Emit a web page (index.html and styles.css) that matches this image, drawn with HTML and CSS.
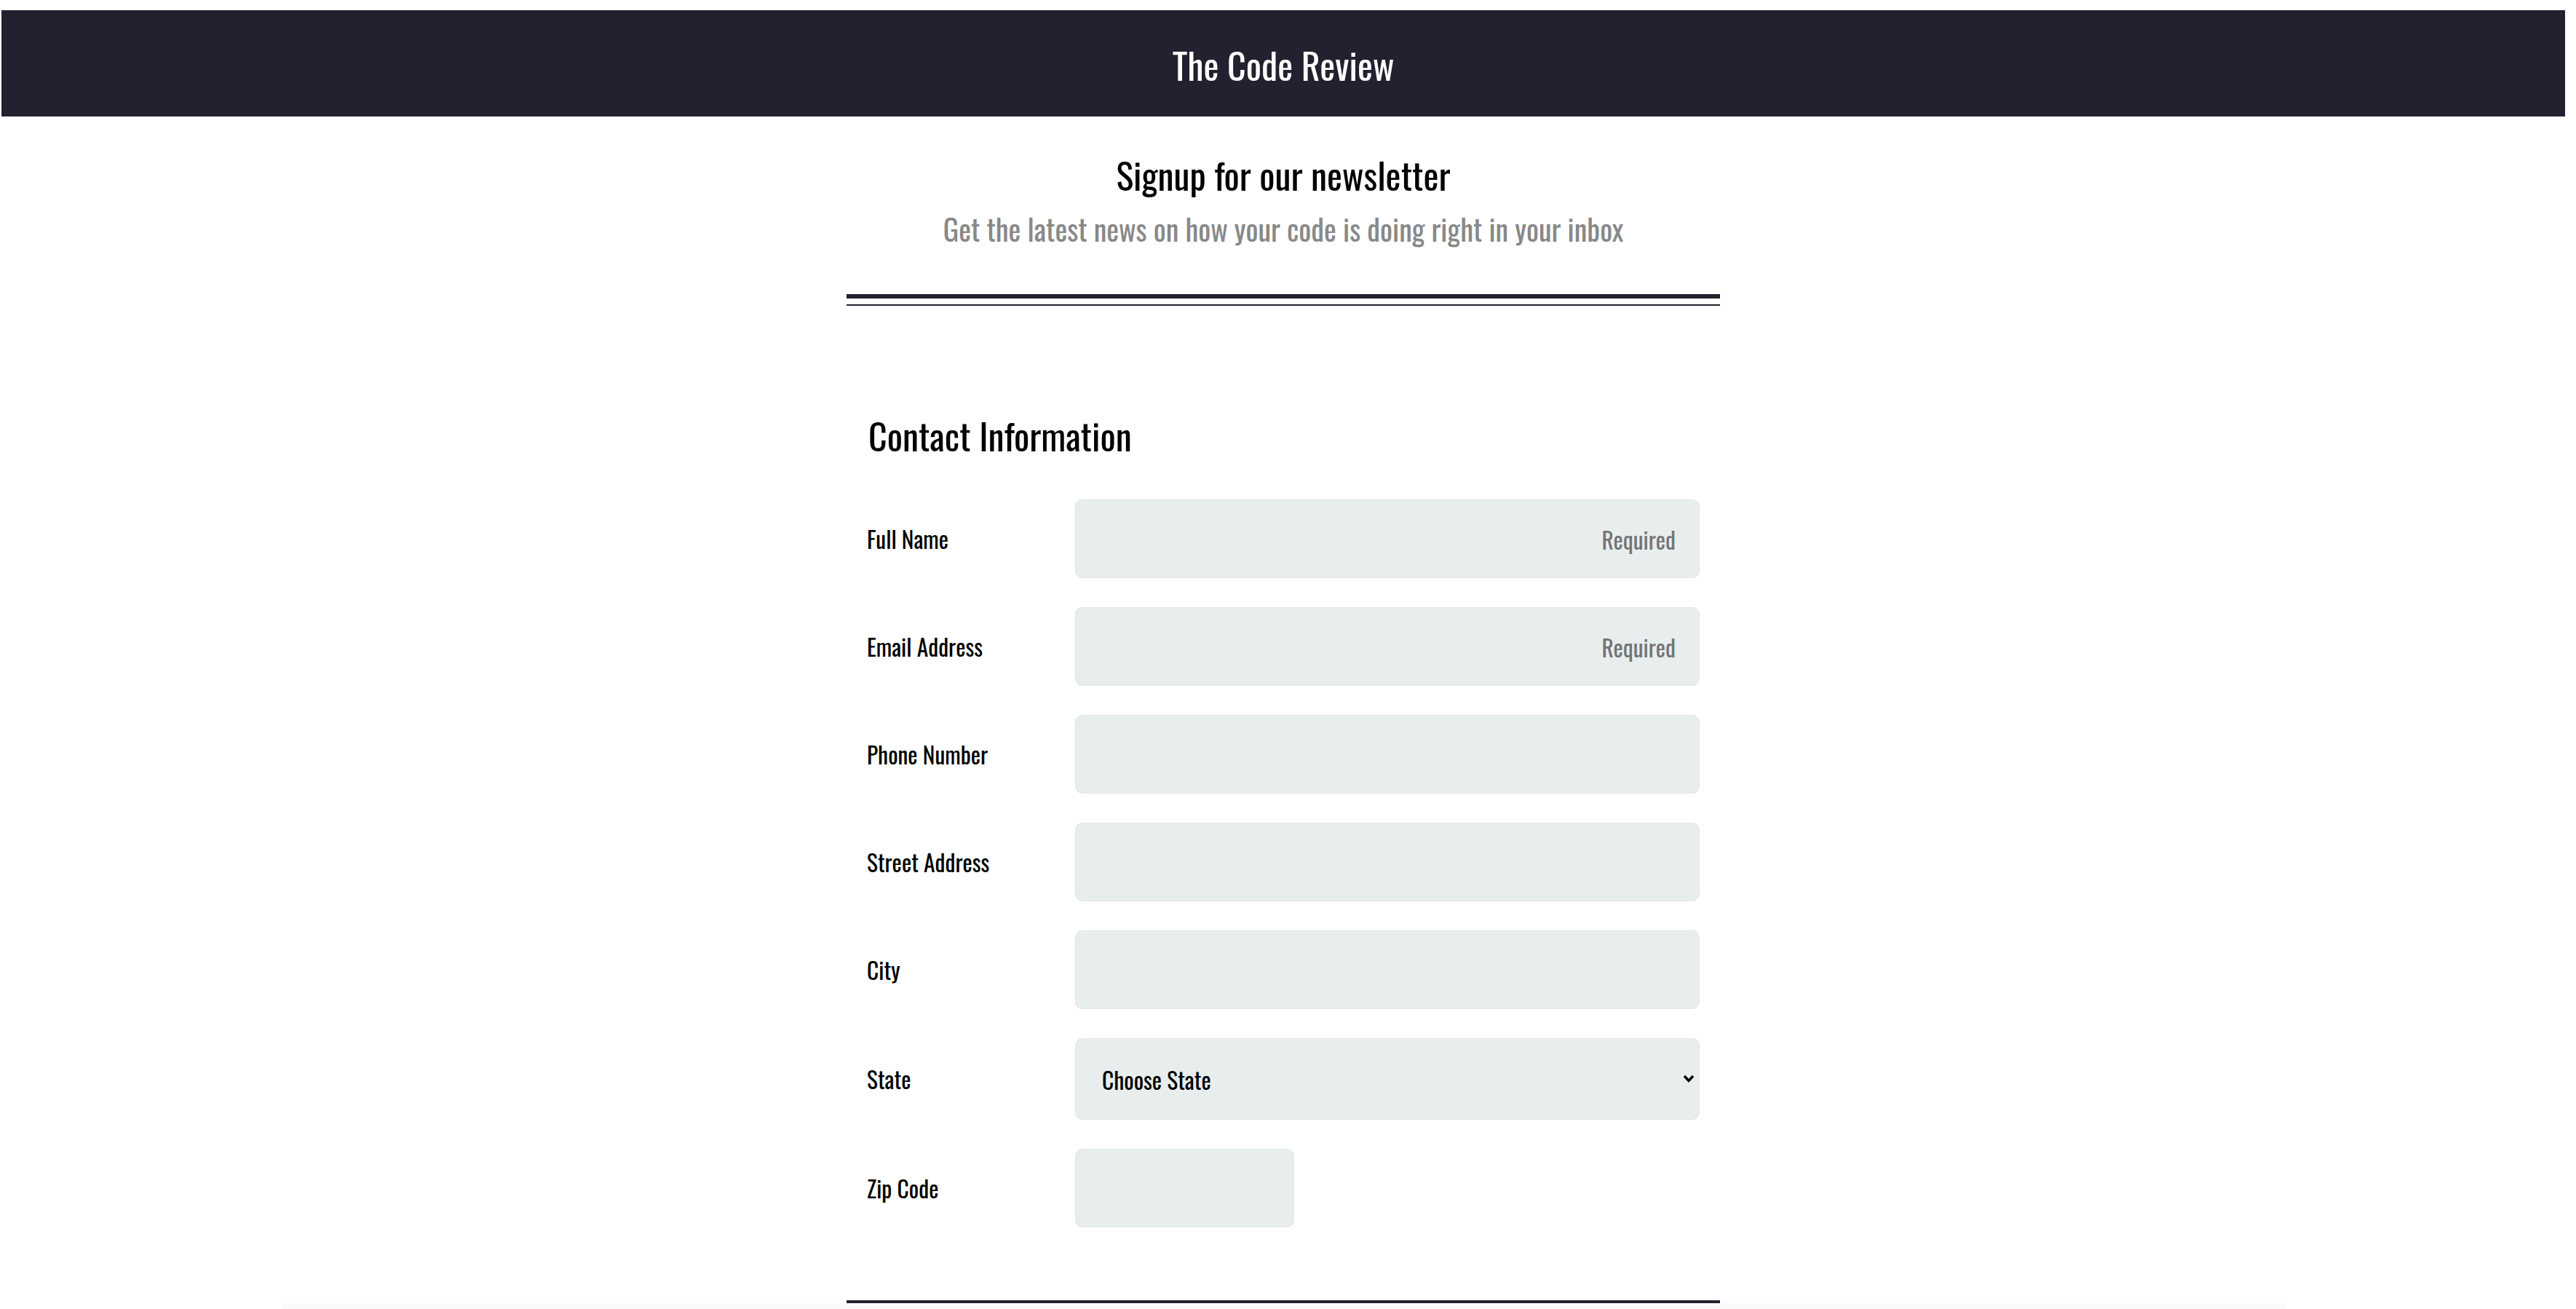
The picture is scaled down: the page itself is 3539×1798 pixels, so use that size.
FILE: index.html
```html
<!DOCTYPE html>
<html lang="en">
<head>
  <meta charset="utf-8">
  <title>The Code Review</title>
  <link rel="stylesheet" href="styles.css">
</head>
<body>
  <div class="page">
    <header class="site-header">
      <h1 class="site-title">The Code Review</h1>
    </header>

    <main class="container">
      <section class="intro">
        <h2 class="intro-title">Signup for our newsletter</h2>
        <p class="intro-sub">Get the latest news on how your code is doing right in your inbox</p>
      </section>

      <div class="double-rule"></div>

      <form class="signup-form">
        <section class="form-section">
          <h3 class="section-title">Contact Information</h3>

          <div class="field">
            <label class="field-label" for="name">Full Name</label>
            <input class="field-input" id="name" type="text" placeholder="Required">
          </div>

          <div class="field">
            <label class="field-label" for="email">Email Address</label>
            <input class="field-input" id="email" type="email" placeholder="Required">
          </div>

          <div class="field">
            <label class="field-label" for="phone">Phone Number</label>
            <input class="field-input" id="phone" type="tel">
          </div>

          <div class="field">
            <label class="field-label" for="street">Street Address</label>
            <input class="field-input" id="street" type="text">
          </div>

          <div class="field">
            <label class="field-label" for="city">City</label>
            <input class="field-input" id="city" type="text">
          </div>

          <div class="field">
            <label class="field-label" for="state">State</label>
            <div class="select-wrap">
              <select class="field-select" id="state">
                <option>Choose State</option>
              </select>
              <svg class="select-arrow" width="16" height="11" viewBox="0 0 16 11" aria-hidden="true">
                <path d="M2 2 L8 8.5 L14 2" fill="none" stroke="#000" stroke-width="3.4" stroke-linecap="butt" stroke-linejoin="miter"/>
              </svg>
            </div>
          </div>

          <div class="field">
            <label class="field-label" for="zip">Zip Code</label>
            <input class="field-input field-input-short" id="zip" type="text">
          </div>
        </section>
      </form>

      <div class="rule"></div>
    </main>

    <div class="footer-strip"></div>
  </div>
</body>
</html>
```
FILE: styles.css
```css
* {
  box-sizing: border-box;
}

html, body {
  margin: 0;
  padding: 0;
  background: #ffffff;
}

body {
  font-family: "Oswald", "Roboto Condensed", "Liberation Sans", sans-serif;
  color: #000000;
  overflow: hidden;
}

.page {
  padding: 14px 15px 0 2px;
}

.site-header {
  background: #22212f;
  padding: 37px 0 35px;
  text-align: center;
}

.site-title {
  margin: 0;
  font-size: 50px;
  font-weight: 400;
  line-height: 74px;
  color: #ffffff;
}

.container {
  width: 1200px;
  margin: 0 auto;
}

.intro {
  text-align: center;
  padding-top: 42px;
}

.intro-title {
  margin: 0;
  font-size: 50px;
  font-weight: 400;
  line-height: 74px;
}

.intro-sub {
  margin: 9px 0 0;
  font-size: 40px;
  line-height: 59px;
  color: #888888;
}

.double-rule {
  margin-top: 60px;
  height: 16px;
  border-top: 6px solid #22212f;
  border-bottom: 2px solid #22212f;
}

.signup-form {
  margin: 0;
  padding: 0 28px;
}

.form-section {
  display: flex;
  flex-direction: column;
  gap: 40px;
}

.section-title {
  margin: 140px 0 12px 2px;
  font-size: 50px;
  font-weight: 400;
  line-height: 74px;
}

.field {
  display: grid;
  grid-template-columns: 286px 1fr;
  align-items: center;
}

.field-label {
  font-size: 31.5px;
  line-height: 46px;
}

.field-input,
.field-select {
  width: 100%;
  height: 108px;
  margin: 0;
  border: 1px solid #e0e6e6;
  border-radius: 10px;
  background: #e8eeee;
  font-family: inherit;
  font-size: 31.5px;
  color: #000000;
  outline: none;
}

.field-input {
  padding: 0 32px;
  text-align: right;
}

.field-input::placeholder {
  color: #757575;
}

.field-input-short {
  width: 301px;
}

.select-wrap {
  position: relative;
}

.field-select {
  display: block;
  height: 112px;
  padding: 0 40px 0 36px;
  -webkit-appearance: none;
  appearance: none;
}

.select-arrow {
  position: absolute;
  right: 7px;
  top: 50%;
  margin-top: -6px;
  pointer-events: none;
}

.rule {
  margin-top: 100px;
  height: 4px;
  background: #22212f;
}

.footer-strip {
  width: 2752px;
  height: 8px;
  margin: 0 auto;
  background: #fafafa;
}
```
